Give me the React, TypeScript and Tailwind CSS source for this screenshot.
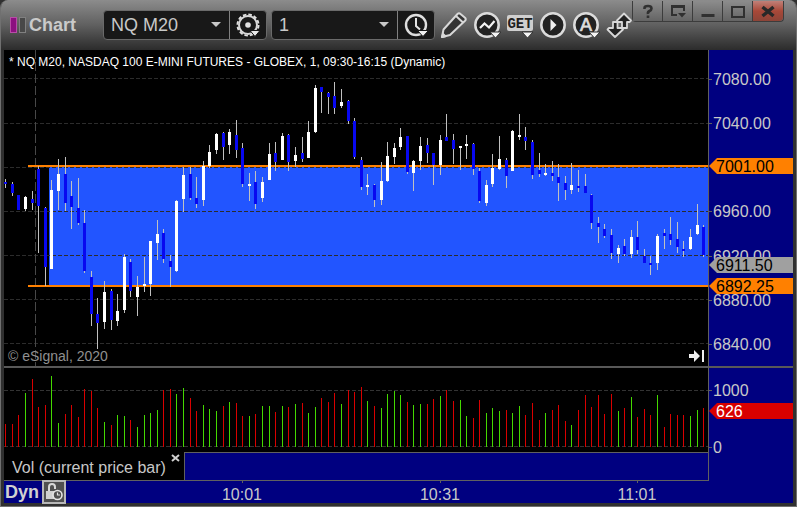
import { useState } from "react"

type Candle = [high: number, top: number, bottom: number, low: number, up: 0 | 1]

// pixel rows of each one-minute bar inside the price pane
const CANDLES: Candle[] = [
  [179, 182, 184, 188, 0], [182, 184, 193, 196, 0], [195, 195, 210, 210, 0], [196, 197, 209, 211, 1],
  [191, 199, 203, 210, 0], [166, 169, 206, 253, 0], [207, 208, 267, 286, 0], [180, 190, 269, 269, 1],
  [159, 174, 191, 210, 1], [157, 174, 203, 211, 0], [181, 196, 207, 229, 0], [178, 208, 223, 225, 0],
  [210, 223, 271, 273, 0], [271, 277, 314, 326, 0], [298, 314, 323, 349, 0], [281, 292, 322, 329, 1],
  [289, 291, 320, 330, 0], [294, 311, 321, 326, 1], [254, 257, 310, 313, 1], [259, 262, 291, 297, 0],
  [276, 287, 297, 316, 1], [257, 284, 286, 292, 1], [241, 241, 284, 296, 1], [220, 234, 243, 260, 1],
  [229, 233, 259, 263, 0], [255, 261, 267, 287, 0], [200, 201, 271, 272, 1], [167, 175, 199, 212, 1],
  [167, 174, 198, 200, 0], [177, 198, 204, 208, 0], [161, 166, 200, 206, 1], [145, 152, 166, 168, 1],
  [133, 134, 150, 154, 1], [132, 133, 147, 160, 0], [129, 132, 145, 154, 1], [120, 135, 150, 158, 0],
  [143, 148, 184, 187, 0], [173, 184, 186, 201, 1], [171, 182, 204, 209, 0], [177, 182, 198, 202, 1],
  [143, 154, 180, 180, 1], [142, 153, 162, 171, 0], [133, 136, 160, 160, 1], [134, 135, 162, 171, 0],
  [147, 155, 161, 167, 1], [137, 153, 159, 162, 0], [121, 132, 158, 158, 1], [85, 88, 132, 133, 1],
  [87, 87, 92, 113, 0], [92, 93, 97, 114, 0], [82, 96, 108, 114, 0], [89, 102, 106, 108, 1],
  [100, 101, 121, 124, 0], [118, 121, 157, 159, 0], [157, 160, 187, 190, 0], [174, 185, 187, 195, 1],
  [184, 185, 200, 207, 0], [162, 181, 200, 205, 1], [142, 156, 181, 182, 1], [143, 148, 157, 164, 1],
  [128, 137, 147, 150, 1], [136, 136, 172, 174, 0], [160, 161, 173, 191, 1], [137, 146, 161, 170, 1],
  [138, 145, 153, 163, 0], [153, 153, 165, 185, 0], [135, 140, 165, 175, 1], [114, 137, 141, 141, 0],
  [134, 140, 149, 164, 0], [146, 146, 148, 170, 1], [135, 144, 146, 159, 1], [143, 144, 169, 175, 0],
  [168, 171, 201, 203, 0], [180, 185, 203, 206, 1], [154, 168, 184, 187, 1], [136, 159, 169, 170, 1],
  [158, 160, 176, 188, 0], [130, 131, 171, 171, 1], [114, 135, 137, 140, 1], [127, 137, 141, 150, 0],
  [140, 142, 175, 179, 0], [153, 170, 174, 177, 0], [164, 173, 175, 176, 1], [161, 173, 176, 181, 0],
  [164, 177, 183, 201, 0], [176, 183, 190, 200, 0], [163, 185, 190, 194, 1], [170, 186, 188, 192, 0],
  [174, 186, 193, 193, 0], [194, 195, 223, 229, 0], [217, 223, 227, 243, 0], [224, 229, 236, 238, 0],
  [229, 235, 253, 259, 0], [245, 248, 254, 263, 1], [239, 246, 254, 256, 0], [230, 237, 254, 258, 1],
  [221, 237, 250, 254, 0], [249, 256, 263, 263, 0], [256, 263, 265, 275, 0], [234, 236, 263, 270, 1],
  [229, 233, 236, 249, 0], [217, 234, 240, 245, 0], [222, 239, 247, 253, 0], [241, 249, 251, 257, 0],
  [229, 237, 249, 250, 1], [204, 225, 234, 235, 1], [225, 227, 255, 257, 0],
]

const VOLUME = [
  424, 424, 415, 393, 379, 407, 405, 376, 423, 414, 405, 417, 389, 391, 408, 422, 425, 415, 416, 420,
  427, 415, 413, 410, 390, 389, 394, 388, 398, 411, 405, 409, 411, 406, 402, 403, 416, 416, 414, 406,
  406, 412, 406, 407, 404, 403, 413, 407, 398, 402, 393, 404, 390, 392, 387, 401, 406, 408, 394, 391,
  395, 402, 405, 404, 404, 399, 396, 390, 401, 400, 416, 418, 400, 413, 408, 411, 410, 413, 406, 415,
  403, 420, 413, 410, 405, 421, 425, 410, 395, 407, 395, 414, 394, 411, 408, 397, 417, 409, 415, 395,
  427, 414, 415, 415, 416, 410, 408,
]

const VOLUME_UP = new Set([
  3, 7, 8, 15, 17, 18, 20, 21, 22, 23, 26, 27, 30, 31, 32, 34, 37, 39, 40, 42, 44, 46, 47, 51, 55, 57, 58,
  59, 60, 62, 63, 66, 69, 70, 73, 74, 75, 77, 78, 82, 86, 93, 95, 99, 104, 105,
])

const GRID = [78, 123, 167, 211, 255, 299, 343]

const PRICES = [
  { y: 79, label: "7080.00" },
  { y: 123, label: "7040.00" },
  { y: 211, label: "6960.00" },
  { y: 256, label: "6920.00" },
  { y: 300, label: "6880.00" },
  { y: 344, label: "6840.00" },
]

const MARKERS = [
  { y: 166, label: "7001.00", color: "#ff8000" },
  { y: 265, label: "6911.50", color: "#a0a0a0" },
  { y: 286, label: "6892.25", color: "#ff8000" },
]

const TIMES = [
  { x: 242, label: "10:01" },
  { x: 440, label: "10:31" },
  { x: 637, label: "11:01" },
]

const barX = (i: number) => Math.floor(5.8 + i * 6.583)

function PriceChart() {
  return (
    <svg viewBox="4 50 704 316" preserveAspectRatio="none" shapeRendering="crispEdges" className="block h-[316px] w-full">
      <rect x="49" y="167" width="659" height="118" fill="#2255ff" />
      {GRID.map((y) => (
        <line key={y} x1="4" x2="708" y1={y + 0.5} y2={y + 0.5} stroke="#2c2c2c" strokeDasharray="4 2" />
      ))}
      <line x1="35.5" x2="35.5" y1="50" y2="366" stroke="#484848" strokeDasharray="9 3" />
      <rect x="28" y="165" width="680" height="2" fill="#ff8000" />
      <rect x="28" y="285" width="680" height="2" fill="#ff8000" />
      {CANDLES.map(([high, top, bottom, low, up], i) => (
        <g key={i}>
          <rect x={barX(i)} y={high} width="1" height={low - high} fill="#c0c0c0" />
          <rect x={barX(i) - 1} y={top} width="3" height={bottom - top} fill={up ? "#ffffff" : "#0808f0"} />
        </g>
      ))}
    </svg>
  )
}

function VolumeChart() {
  return (
    <svg viewBox="4 368 704 84" preserveAspectRatio="none" shapeRendering="crispEdges" className="block h-[84px] w-full">
      <line x1="4" x2="708" y1="390.5" y2="390.5" stroke="#333333" strokeDasharray="4 2" />
      <line x1="4" x2="708" y1="446.5" y2="446.5" stroke="#333333" strokeDasharray="4 2" />
      {VOLUME.map((y, i) => (
        <rect key={i} x={barX(i)} y={y} width="1" height={447 - y} fill={VOLUME_UP.has(i) ? "#44d800" : "#d80000"} />
      ))}
    </svg>
  )
}

function Marker({ y, label, color, text = "#000000" }: { y: number; label: string; color: string; text?: string }) {
  return (
    <g>
      <path d={`M709 ${y}L717 ${y - 8}H793V${y + 8}H717Z`} fill={color} />
      <text x="716" y={y + 6} fill={text}>{label}</text>
    </g>
  )
}

function PriceAxis() {
  return (
    <svg viewBox="709 50 84 316" className="block h-[316px] w-[84px] text-[16px]">
      {PRICES.map((p) => (
        <g key={p.label}>
          <rect x="709" y={p.y} width="3" height="1" fill="#606060" />
          <text x="713" y={p.y + 6} fill="#c8c8c8">{p.label}</text>
        </g>
      ))}
      {MARKERS.map((m) => (
        <Marker key={m.label} {...m} />
      ))}
    </svg>
  )
}

function VolumeAxis() {
  return (
    <svg viewBox="709 368 84 112" className="block h-28 w-[84px] text-[16px]">
      <rect x="709" y="390" width="3" height="1" fill="#606060" />
      <rect x="709" y="447" width="3" height="1" fill="#606060" />
      <text x="713" y="396" fill="#c8c8c8">1000</text>
      <text x="713" y="453" fill="#c8c8c8">0</text>
      <Marker y={411} label="626" color="#d80000" text="#ffffff" />
    </svg>
  )
}

function GearIcon() {
  return (
    <svg width="26" height="26" viewBox="0 0 26 26">
      <circle cx="13" cy="13" r="10.5" fill="none" stroke="#e0e0e0" strokeWidth="2" strokeDasharray="3.5 2" />
      <circle cx="13" cy="13" r="9" fill="none" stroke="#d8d8d8" strokeWidth="2" />
      <circle cx="13" cy="13" r="2.8" fill="#e0e0e0" />
      <path d="M15 18.5h10l-5 6z" fill="#e8e8e8" stroke="#181818" />
    </svg>
  )
}

function ClockIcon() {
  return (
    <svg width="26" height="26" viewBox="0 0 26 26" fill="none">
      <circle cx="13" cy="13" r="10" stroke="#dedede" strokeWidth="2.4" />
      <path d="M13 6v8l4 3.5" stroke="#e4e4e4" strokeWidth="2" />
      <path d="M14.5 18.5h11l-5.5 6z" fill="#f0f0f0" stroke="#181818" />
    </svg>
  )
}

function PencilIcon() {
  return (
    <svg width="28" height="28" viewBox="0 0 28 28" fill="#343434" stroke="#d8d8d8" strokeWidth="2" strokeLinejoin="round">
      <path d="M2 26l1.500-7.500L17.500 3q1.500-1.500 3 0l4.500 3.800q1.500 1.500 0 3L10 24z" />
      <path d="M16 5l7 6.500" />
      <path d="M2 26l1-3 2.500 2.200z" fill="#d8d8d8" />
    </svg>
  )
}

function TrendIcon() {
  return (
    <svg width="28" height="28" viewBox="0 0 28 28" fill="none">
      <circle cx="14" cy="14" r="11.7" fill="#222222" stroke="#dcdcdc" strokeWidth="2.5" />
      <path d="M7 17l4.500-4.500 4.500 4L21.500 10" stroke="#f4f4f4" strokeWidth="2.2" />
      <path d="M17 21h11l-5.500 6z" fill="#f4f4f4" stroke="#333333" />
    </svg>
  )
}

function GetIcon() {
  return (
    <svg width="28" height="28" viewBox="0 0 28 28">
      <rect x="1" y="4" width="26" height="16" rx="2" fill="#cfcfcf" />
      <text x="14" y="17" textAnchor="middle" fill="#202020" className="font-['Liberation_Mono'] text-[14px] font-bold">GET</text>
      <path d="M16 21h11l-5.500 6z" fill="#f4f4f4" stroke="#333333" />
    </svg>
  )
}

function PlayIcon() {
  return (
    <svg width="28" height="28" viewBox="0 0 28 28">
      <circle cx="14" cy="14" r="11.7" fill="#222222" stroke="#dcdcdc" strokeWidth="2.5" />
      <path d="M11.500 8v12l6-6z" fill="#f0f0f0" />
    </svg>
  )
}

function AnnotateIcon() {
  return (
    <svg width="28" height="28" viewBox="0 0 28 28" fill="none">
      <circle cx="14" cy="14" r="11.7" fill="#222222" stroke="#dcdcdc" strokeWidth="2.5" />
      <text x="14" y="20" textAnchor="middle" fill="#dcdcdc" stroke="#dcdcdc" strokeWidth="0.7" className="text-[18px]">A</text>
      <path d="M17 21h11l-5.500 6z" fill="#f4f4f4" stroke="#333333" />
    </svg>
  )
}

function SwapIcon() {
  return (
    <svg width="28" height="28" viewBox="0 0 28 28" fill="#222222" stroke="#d8d8d8" strokeWidth="1.8" strokeLinejoin="round">
      <path d="M8 11h4.500v6h4l1.500 1.500-8 7.500-7.500-7.500L4 17h4z" />
      <path d="M17 17v-6h-3.500L12 9.500 19 2.500l7 7-1.500 1.500H22v6z" />
    </svg>
  )
}

function LockIcon() {
  return (
    <svg width="18" height="18" viewBox="0 0 18 18" fill="none">
      <path d="M4 9V4q0-3 3-3t3 3v2" stroke="#d8d8d8" strokeWidth="2" />
      <path d="M1 8h9v8H1z" fill="#d0d0d0" />
      <circle cx="12.5" cy="12" r="4.5" fill="#505050" stroke="#e4e4e4" strokeWidth="1.6" />
      <path d="M12.500 9.500V12H15" stroke="#e4e4e4" strokeWidth="1.2" />
    </svg>
  )
}

const TOOLS = [
  { name: "Draw", icon: <PencilIcon /> },
  { name: "Studies", icon: <TrendIcon /> },
  { name: "GET", icon: <GetIcon /> },
  { name: "Playback", icon: <PlayIcon /> },
  { name: "Annotate", icon: <AnnotateIcon /> },
  { name: "Swap", icon: <SwapIcon /> },
]

interface PickerProps {
  label: string
  value: string
  options: string[]
  onChange: (value: string) => void
  action: string
  icon: React.ReactNode
}

function Picker({ label, value, options, onChange, action, icon }: PickerProps) {
  return (
    <div className="flex h-[30px] w-[164px] overflow-hidden rounded border border-[#6a6a6a] bg-[#181818]">
      <div className="relative flex-1 border-r border-[#808080]">
        <select
          aria-label={label}
          value={value}
          onChange={(e) => onChange(e.target.value)}
          className="h-full w-full appearance-none bg-transparent pl-[7px] text-[18px] text-[#c8c8c8] outline-none"
        >
          {options.map((o) => (
            <option key={o}>{o}</option>
          ))}
        </select>
        <svg width="10" height="5" className="pointer-events-none absolute top-[11px] right-2">
          <path d="M0 0h10L5 5z" fill="#c8c8c8" />
        </svg>
      </div>
      <button aria-label={action} className="flex w-9 items-center justify-center">
        {icon}
      </button>
    </div>
  )
}

const WINDOW_BUTTONS = [
  {
    name: "Help",
    icon: <path d="M5.500 6V5Q5.500 3 9 3t3.500 2.500Q12.500 7 10.500 8T9 11M9 12.500V15" strokeWidth="2.6" />,
  },
  { name: "Dock", icon: <><path d="M8 12H3V3h12v5M3 4h12" strokeWidth="2" /><path d="M9 10h8l-4 4.500z" fill="#303030" stroke="none" /></> },
  { name: "Minimize", icon: <path d="M2.500 12.500h13" strokeWidth="3" /> },
  { name: "Maximize", icon: <path d="M3 3v11h12V3M2 4h14" strokeWidth="2" /> },
]

function TitleBar() {
  const [symbol, setSymbol] = useState("NQ M20")
  const [interval, setInterval] = useState("1")

  return (
    <header className="flex h-[50px] items-start bg-linear-to-b from-[#8c8c8c] via-[#606060] via-50% to-[#2c2c2c] pl-[9px]">
      <div className="flex h-[50px] w-[93px] shrink-0 items-center gap-[3px]">
        <svg width="16" height="16" viewBox="0 0 16 16" shapeRendering="crispEdges">
          <path d="M0 0h7v16H0z" fill="#b84ca8" />
          <path d="M1 1h5v14H1z" fill="#8c1080" />
          <path d="M9 0h7v16H9z" fill="#808080" />
          <path d="M10 1h5v14h-5z" fill="#484848" />
        </svg>
        <h1 className="text-[18px] leading-5 font-bold text-[#cacaca]">Chart</h1>
      </div>
      <div className="flex shrink-0 gap-1 pt-[10px]">
        <Picker label="Symbol" value={symbol} options={["NQ M20", "ES M20"]} onChange={setSymbol} action="Symbol settings" icon={<GearIcon />} />
        <Picker label="Interval" value={interval} options={["1", "5", "15"]} onChange={setInterval} action="Time template" icon={<ClockIcon />} />
      </div>
      <div className="-mr-1 flex shrink-0 gap-[5px] pt-[11px] pl-[5px]">
        {TOOLS.map((t) => (
          <button key={t.name} aria-label={t.name} className="h-7 w-7">
            {t.icon}
          </button>
        ))}
      </div>
      <div className="mt-px mr-3 ml-auto flex h-[21px] shrink-0 divide-x divide-[#3c3c3c] rounded-b border border-t-0 border-[#3c3c3c]">
        {WINDOW_BUTTONS.map((b) => (
          <button key={b.name} aria-label={b.name} className="flex w-[30px] items-center justify-center bg-linear-to-b from-[#8c8c8c] to-[#646464]">
            <svg width="18" height="17" fill="none" stroke="#303030">{b.icon}</svg>
          </button>
        ))}
        <button aria-label="Close" className="flex w-[30px] items-center justify-center rounded-br bg-linear-to-b from-[#c08078] via-[#a84838] via-50% to-[#8c4438]">
          <svg width="18" height="17" stroke="#282828" strokeWidth="3.5">
            <path d="M3.500 4l11 9M14.500 4l-11 9" />
          </svg>
        </button>
      </div>
    </header>
  )
}

export default function App() {
  const [showVolume, setShowVolume] = useState(true)

  return (
    <div className="bg-[#303030] font-['Liberation_Sans',Arial,sans-serif]">
      <div className="overflow-hidden rounded-t-lg border-x border-b border-[#707070] bg-[#303030]">
        <TitleBar />
        <main className="mx-[3px] mb-[3px] bg-[#000080]">
          <div className="flex">
            <section className="min-w-0 flex-1 border-r border-[#606060]">
              <div className="relative border-b-2 border-[#585858] bg-black">
                <PriceChart />
                <h2 className="absolute top-1 left-[5px] text-[12px] leading-4 text-white">
                  * NQ M20, NASDAQ 100 E-MINI FUTURES - GLOBEX, 1, 09:30-16:15 (Dynamic)
                </h2>
                <p className="absolute bottom-0 left-1 text-[14px] leading-5 text-[#909090]">© eSignal, 2020</p>
                <button aria-label="Go to latest bar" className="absolute right-[3px] bottom-1">
                  <svg width="16" height="12" className="block" fill="#f0f0f0">
                    <path d="M0 4h5V0l6 6-6 6V8H0zM13 0h2v12h-2z" />
                  </svg>
                </button>
              </div>
              <div className="bg-black">
                <VolumeChart />
              </div>
              <div className="flex h-[29px] border-y border-[#606060]">
                {showVolume && (
                  <div className="-mt-px flex w-[181px] justify-between border-r border-[#606060] bg-black pr-1 pl-2">
                    <span className="pt-[6px] text-[16px] leading-5 text-[#c8c8c8]">Vol (current price bar)</span>
                    <button aria-label="Close study" onClick={() => setShowVolume(false)} className="h-4 pb-1">
                      <svg width="9" height="8" className="block" stroke="#d0d0d0" strokeWidth="2">
                        <path d="M1 1l7 6M8 1L1 7" />
                      </svg>
                    </button>
                  </div>
                )}
              </div>
            </section>
            <aside>
              <div className="border-b-2 border-[#585858]">
                <PriceAxis />
              </div>
              <VolumeAxis />
            </aside>
          </div>
          <footer className="relative flex h-[22px] items-center">
            <strong className="w-[38px] pl-px text-[18px] leading-5 text-[#d0d0d0]">Dyn</strong>
            <button aria-label="Lock time range" className="z-10 -mt-px flex h-6 w-6 items-center justify-center border-2 border-[#b8b8b8] bg-[#505050]">
              <LockIcon />
            </button>
            <svg viewBox="4 481 789 22" className="absolute inset-0 h-full w-full text-[16px]">
              {TIMES.map((t) => (
                <g key={t.label}>
                  <rect x={t.x} y="481" width="1" height="2" fill="#606060" />
                  <text x={t.x} y="500" textAnchor="middle" fill="#c8c8c8">{t.label}</text>
                </g>
              ))}
            </svg>
          </footer>
        </main>
      </div>
    </div>
  )
}
